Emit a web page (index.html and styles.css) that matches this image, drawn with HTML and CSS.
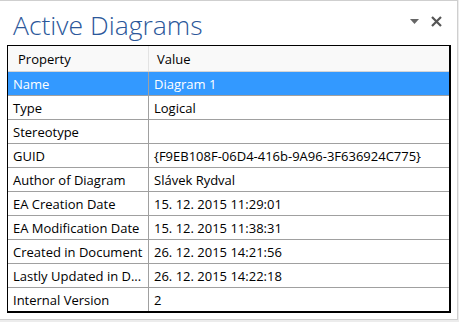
FILE: index.html
```html
<!DOCTYPE html>
<html lang="en">
<head>
    <meta charset="UTF-8">
    <title>Active Diagrams</title>
    <link rel="stylesheet" href="styles.css">
</head>
<body>
    <div class="pane">
        <!-- Title bar -->
        <div class="pane-head">
            <h1 class="pane-title">Active Diagrams</h1>
            <div class="pane-tools">
                <svg class="tool-menu" width="9" height="5" viewBox="0 0 9 5"><path d="M0 0 H9 L4.5 5 Z" fill="#666"/></svg>
                <svg class="tool-close" width="11" height="11" viewBox="0 0 11 11"><path d="M1 1 L10 10 M10 1 L1 10" stroke="#555" stroke-width="2.2"/></svg>
            </div>
        </div>

        <!-- Property grid -->
        <div class="grid">
            <div class="row head">
                <div class="cell key">Property</div>
                <div class="cell val">Value</div>
            </div>
            <div class="row selected">
                <div class="cell key">Name</div>
                <div class="cell val">Diagram 1</div>
            </div>
            <div class="row">
                <div class="cell key">Type</div>
                <div class="cell val">Logical</div>
            </div>
            <div class="row">
                <div class="cell key">Stereotype</div>
                <div class="cell val"></div>
            </div>
            <div class="row">
                <div class="cell key">GUID</div>
                <div class="cell val">{F9EB108F-06D4-416b-9A96-3F636924C775}</div>
            </div>
            <div class="row">
                <div class="cell key">Author of Diagram</div>
                <div class="cell val">Slávek Rydval</div>
            </div>
            <div class="row">
                <div class="cell key">EA Creation Date</div>
                <div class="cell val">15. 12. 2015 11:29:01</div>
            </div>
            <div class="row">
                <div class="cell key">EA Modification Date</div>
                <div class="cell val">15. 12. 2015 11:38:31</div>
            </div>
            <div class="row">
                <div class="cell key">Created in Document</div>
                <div class="cell val">26. 12. 2015 14:21:56</div>
            </div>
            <div class="row">
                <div class="cell key">Lastly Updated in D...</div>
                <div class="cell val">26. 12. 2015 14:22:18</div>
            </div>
            <div class="row last">
                <div class="cell key">Internal Version</div>
                <div class="cell val">2</div>
            </div>
        </div>
    </div>
</body>
</html>
```

FILE: styles.css
```css
body {
    margin: 0;
    background: #ececec;
    font-family: 'Segoe UI', 'Open Sans', sans-serif;
}
.pane {
    width: 457px;
    height: 318px;
    background: #fff;
    border-top: 1px solid #cfcfcf;
    border-right: 1px solid #cfcfcf;
    border-bottom: 1px solid #cfcfcf;
}
.pane-head {
    display: flex;
    align-items: flex-start;
    justify-content: space-between;
    height: 44px;
}
.pane-title {
    margin: 0;
    padding: 9px 0 0 13px;
    font-size: 26.5px;
    font-weight: 300;
    line-height: 30px;
    color: #2b579a;
}
.pane-tools {
    display: flex;
    align-items: center;
    gap: 12px;
    padding: 15px 15px 0 0;
}
.grid {
    margin: 0 6px 0 7px;
    border: 1px solid #000;
    border-right-width: 2px;
    border-bottom-width: 2px;
    font-size: 13px;
    color: #000;
}
.row {
    display: grid;
    grid-template-columns: 141px 1fr;
    height: 23px;
    border-bottom: 1px solid #a0a0a0;
}
.row.last {
    border-bottom: none;
}
.cell {
    display: flex;
    align-items: center;
    padding-left: 5px;
    white-space: nowrap;
    overflow: hidden;
}
.key {
    border-right: 1px solid #a0a0a0;
}
.val {
    padding-left: 5px;
}
.head {
    height: 25px;
    background: #f9f9f9;
    border-bottom-color: #d5d5d5;
}
.head .key {
    padding-left: 10px;
    border-right-color: #e3e3e3;
}
.head .val {
    padding-left: 8px;
}
.selected {
    background: #3399ff;
    color: #fff;
}
```
